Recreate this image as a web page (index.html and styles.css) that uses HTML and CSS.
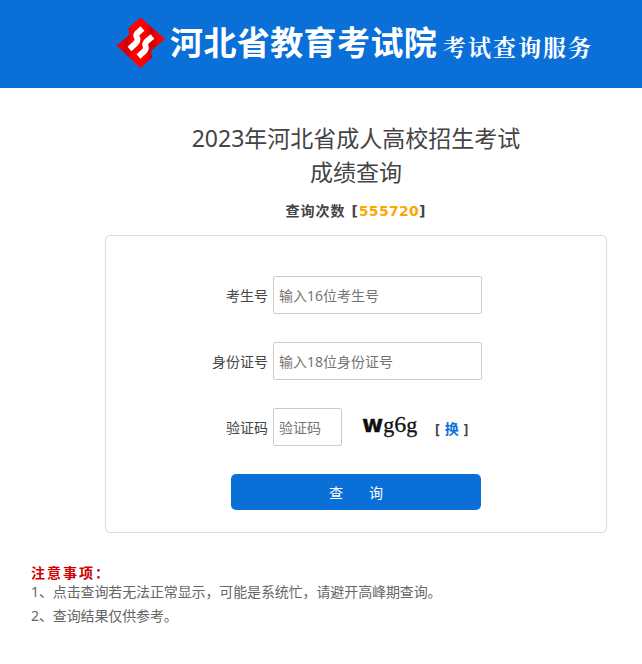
FILE: index.html
```html
<!DOCTYPE html>
<html lang="zh-CN">
<head>
<meta charset="utf-8">
<title>考试查询服务</title>
<link rel="stylesheet" href="styles.css">
</head>
<body>
<header class="banner">
  <svg class="logo" width="50" height="52" viewBox="0 0 50 52">
    <defs><linearGradient id="shade" x1="0" y1="0" x2="1" y2="0"><stop offset="0" stop-color="#ff0000"/><stop offset="0.2" stop-color="#c8000a"/><stop offset="0.32" stop-color="#ff0000"/><stop offset="0.62" stop-color="#ff0000"/><stop offset="0.72" stop-color="#c8000a"/><stop offset="0.85" stop-color="#ff0000"/></linearGradient></defs>
    <path fill="url(#shade)" d="M24.500 1.500 49 23 36 34Q34 37 36.500 41L24.500 52 .5 29.500 12 20Q14.500 17 12 12.500Z"/>
    <path fill="none" stroke="#fff" stroke-width="5.800" stroke-linejoin="round" d="M26.500 12.500 21 17.500Q19.500 19 21 21.500T20 27L13.500 33"/>
    <path fill="none" stroke="#fff" stroke-width="5.800" stroke-linejoin="round" d="M36.500 20.500 30.500 25.500Q28.500 27.500 29.500 30T28.500 35L22.500 40.500"/>
  </svg>
  <div class="brand">河北省教育考试院</div>
  <div class="service">考试查询服务</div>
</header>
<main class="main">
  <h1 class="title">2023年河北省成人高校招生考试<br>成绩查询</h1>
  <p class="count">查询次数 [<span class="num">555720</span>]</p>
  <form class="card">
    <div class="row"><label class="label" for="ksh">考生号</label><input class="field" id="ksh" placeholder="输入16位考生号"></div>
    <div class="row"><label class="label" for="sfz">身份证号</label><input class="field" id="sfz" placeholder="输入18位身份证号"></div>
    <div class="row"><label class="label" for="yzm">验证码</label><input class="field short" id="yzm" placeholder="验证码"><span class="captcha"><b>w</b>g<i>6</i>g</span><span class="swap">[ <a>换</a> ]</span></div>
    <button class="submit" type="button"><span>查</span><span>询</span></button>
  </form>
</main>
<section class="notes">
  <h2 class="notes-title">注意事项：</h2>
  <p class="note">1、点击查询若无法正常显示，可能是系统忙，请避开高峰期查询。</p>
  <p class="note">2、查询结果仅供参考。</p>
</section>
</body>
</html>
```
FILE: styles.css
```css
* { box-sizing: border-box; }
body, h1, h2, p { margin: 0; }
body {
  width: 642px;
  height: 664px;
  overflow: hidden;
  background: #fff;
  color: #444;
  font: 14px/24px "Noto Sans", "Noto Sans CJK SC", sans-serif;
}
.banner {
  display: flex;
  height: 88px;
  padding-left: 116px;
  background: #0b6fd8;
  color: #fff;
  white-space: nowrap;
}
.logo { margin-top: 16px; flex: none; }
.brand {
  width: 273px;
  margin: 17px 0 0 4px;
  font: 700 33px/48px "Noto Sans CJK SC", sans-serif;
  letter-spacing: .4px;
}
.service {
  margin-top: 28px;
  font: 700 23px/38px "Noto Serif CJK SC", "Noto Sans CJK SC", serif;
  letter-spacing: 2px;
}
.main { width: 502px; margin-left: 105px; padding-top: 33px; }
.title { font-size: 23px; line-height: 34px; font-weight: 400; text-align: center; }
.count {
  height: 46px;
  padding-top: 10px;
  font-weight: 700;
  font-family: "DejaVu Sans", "Noto Sans CJK SC", sans-serif;
  font-size: 14px;
  letter-spacing: 1px;
  text-align: center;
  line-height: 24px;
}
.num { letter-spacing: .3px; color: #ffa500; }
.card {
  height: 298px;
  padding-top: 40px;
  border: 1px solid #ddd;
  border-radius: 5px;
}
.row { display: flex; align-items: center; height: 38px; margin-bottom: 28px; }
.label { width: 162px; margin-right: 5px; text-align: right; padding-top: 2px; }
.field {
  width: 209px;
  height: 38px;
  padding: 0 5px;
  border: 1px solid #ccc;
  border-radius: 2px;
  font: inherit;
  background: #fff;
}
.field::placeholder { color: #757575; opacity: 1; }
.short { width: 69px; }
.captcha {
  width: 73px;
  margin: -6px 0 0 20px;
  color: #111;
  font: 22px/30px "Liberation Serif", serif;
  -webkit-text-stroke: .3px #111;
}
.captcha b { font: 700 23px/30px "DejaVu Sans", sans-serif; }
.captcha i { font: 24px/30px "Liberation Serif", serif; }
.swap { font-weight: 700; padding-top: 3px; letter-spacing: .7px; }
.swap a { color: #0b6fd8; }
.submit {
  display: flex;
  justify-content: center;
  gap: 26px;
  width: 250px;
  height: 36px;
  margin-left: 125px;
  padding: 1px 0 0;
  border: 0;
  border-radius: 5px;
  background: #0b6fd8;
  color: #fff;
  font: 14px/34px "Noto Sans CJK SC", sans-serif;
}
.notes { padding: 28px 0 0 31px; color: #666; }
.notes-title { color: #c00; font-size: 14px; line-height: 20px; height: 19px; padding-top: 2px; letter-spacing: 2px; font-weight: 700; }
.note { line-height: 24px; letter-spacing: -.12px; }
```
